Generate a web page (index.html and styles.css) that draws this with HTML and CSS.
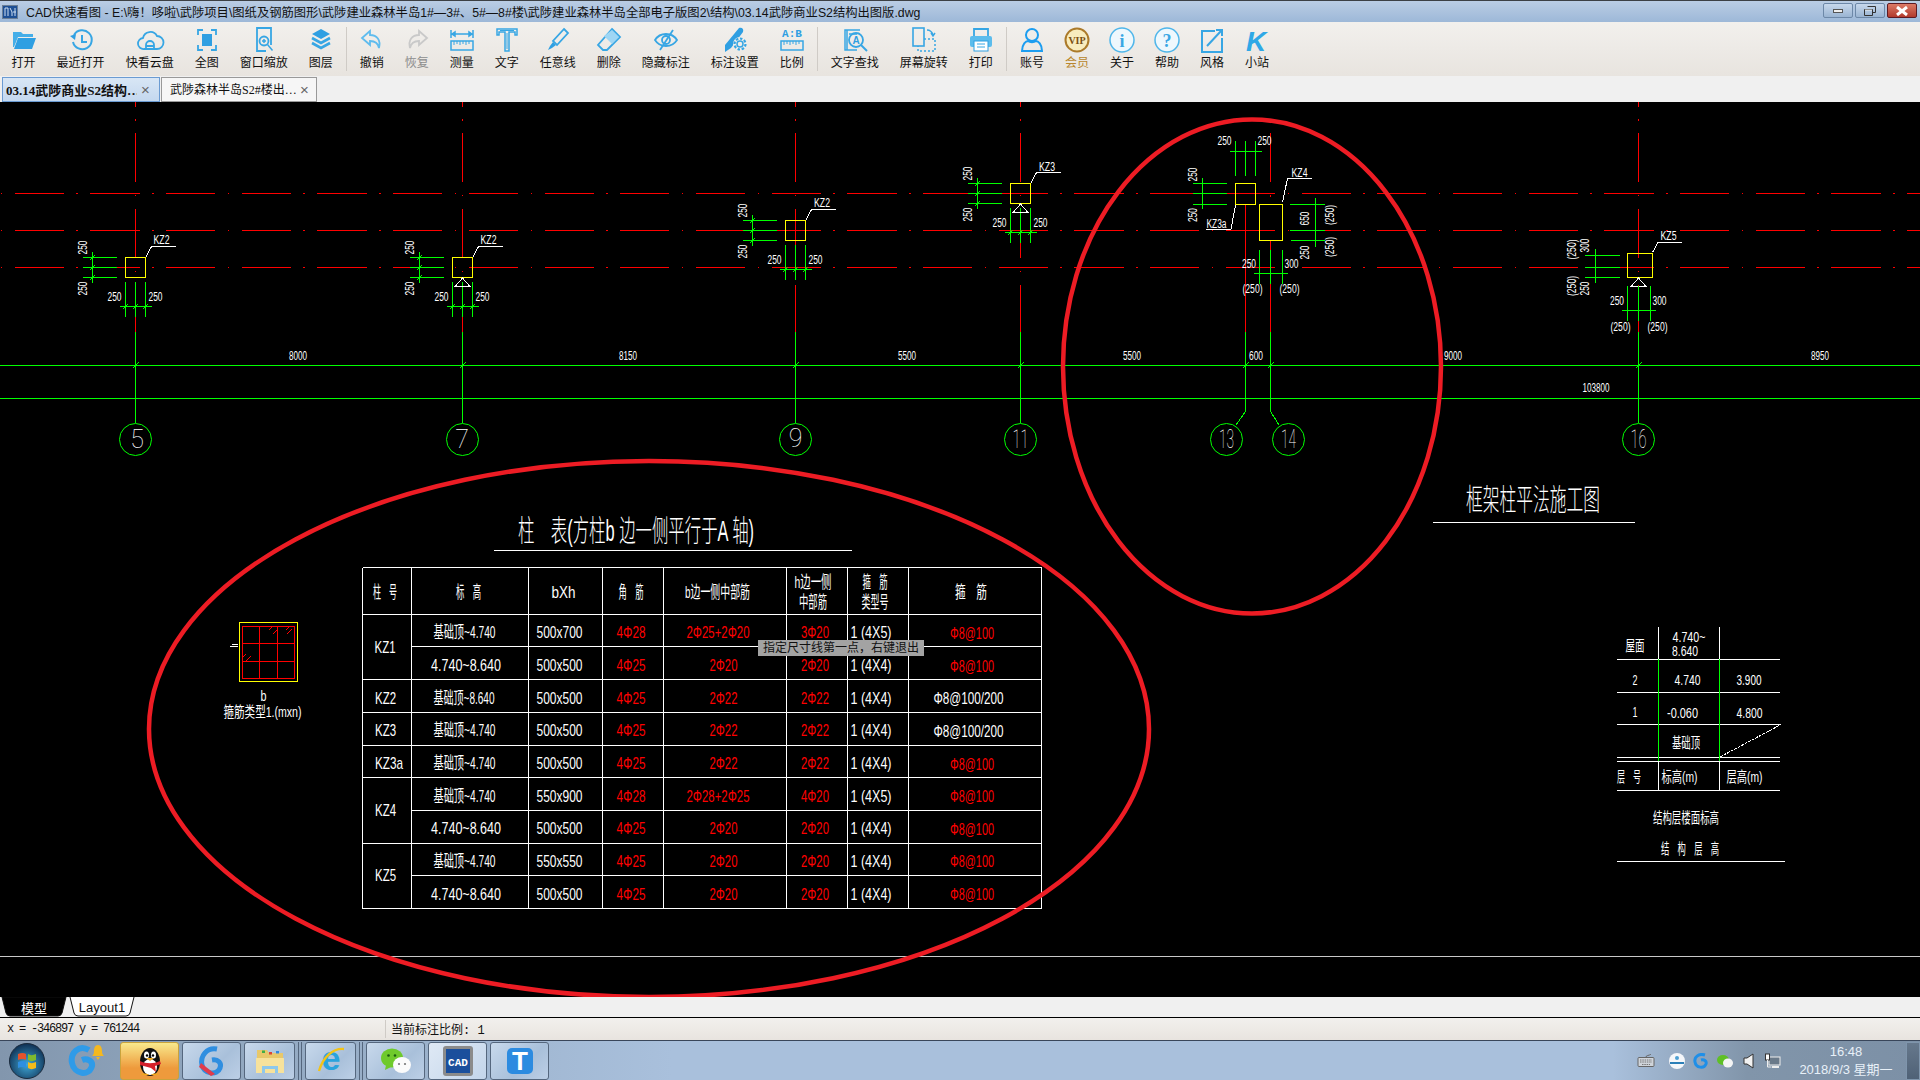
FILE: index.html
```html
<!DOCTYPE html>
<html lang="zh-CN">
  <head>
    <meta charset="UTF-8" />
    <title>CAD快速看图</title>
    <link rel="stylesheet" href="styles.css">
  </head>
  <body>
    <div class="app">
      <!-- 标题栏 -->
      <header class="titlebar">
        <svg class="app-icon" viewBox="0 0 16 14"><rect width="16" height="14" fill="#6b7f96"/><rect x="1" y="1" width="14" height="12" fill="#1d4f94"/><path d="M3 3v8M3 3h3v8M8 3l2 4v4M13 3v8M11 7h3" stroke="#cfe0f3" fill="none"/></svg>
        <span class="title-text">CAD快速看图 - E:\嗨！哆啦\武陟项目\图纸及钢筋图形\武陟建业森林半岛1#—3#、5#—8#楼\武陟建业森林半岛全部电子版图2\结构\03.14武陟商业S2结构出图版.dwg</span>
        <div class="winbtns">
          <span class="winbtn"><i class="w-min"></i></span>
          <span class="winbtn"><svg viewBox="0 0 14 12" width="14" height="12"><path d="M4.5 1.5h8v6h-3M1.5 4.5h8v6h-8z" fill="none" stroke="#333"/><path d="M2 5h7" stroke="#eee"/></svg></span>
          <span class="winbtn close"><svg viewBox="0 0 14 10" width="14" height="10"><path d="M2 1l10 8M12 1L2 9" stroke="#fff" stroke-width="3"/></svg></span>
        </div>
      </header>

      <!-- 工具栏 -->
      <nav class="toolbar">
        <a class="tool"><svg class="ico" viewBox="0 0 26 26"><path fill="#45aee8" d="M2 5h8l2 2h10v3H7L3 20H2z"/><path fill="#2f9fe2" d="M7 11h18l-4 11H3z"/></svg><span>打开</span></a>
        <a class="tool"><svg class="ico" viewBox="0 0 26 26"><path class="st" stroke-width="2" d="M6 8a9.500 9.500 0 1 1-1 7"/><path fill="#2f9fe2" d="M2 9l6-2-1 6z"/><path class="st" stroke-width="2" d="M14 8v7h5"/></svg><span>最近打开</span></a>
        <a class="tool"><svg class="ico" viewBox="0 0 26 26"><path class="st" stroke-width="1.800" d="M7 22a5.500 5.500 0 0 1-1-11 7.500 7.500 0 0 1 14-2 6.500 6.500 0 0 1 0 13z"/><path class="st" stroke-width="1.800" d="M9 22v-4a4 4 0 0 1 8 0v4M9 19h8"/></svg><span>快看云盘</span></a>
        <a class="tool"><svg class="ico" viewBox="0 0 26 26"><path class="st" stroke-width="1.800" d="M4 8V3h5M17 3h5v5M22 18v5h-5M9 23H4v-5"/><rect x="8" y="7" width="10" height="12" fill="#2f9fe2"/></svg><span>全图</span></a>
        <a class="tool"><svg class="ico" viewBox="0 0 26 26"><path class="st" stroke-width="1.800" d="M6 18V1h14v17"/><path class="st" stroke-width="1.800" d="M6 18v6h9"/><circle class="st" stroke-width="1.800" cx="13" cy="14" r="4.500"/><path class="st" stroke-width="1.500" d="M11 14h4M13 12v4M16.500 17.500l5 6"/></svg><span>窗口缩放</span></a>
        <a class="tool"><svg class="ico" viewBox="0 0 26 26"><path fill="#2f9fe2" d="M13 2l9 5-9 5-9-5z"/><path class="st" stroke-width="2.600" d="M4 11l9 5 9-5M4 16l9 5 9-5"/></svg><span>图层</span></a>
        <i class="sep"></i>
        <a class="tool"><svg class="ico" viewBox="0 0 26 26"><path class="st soft" stroke-width="1.800" d="M11 4L3 11l8 7v-4c5 0 8 2 9 7 2-8-2-13-9-13z"/></svg><span>撤销</span></a>
        <a class="tool off"><svg class="ico" viewBox="0 0 26 26"><path class="st gray" stroke-width="1.800" d="M15 4l8 7-8 7v-4c-5 0-8 2-9 7-2-8 2-13 9-13z"/></svg><span>恢复</span></a>
        <a class="tool"><svg class="ico" viewBox="0 0 26 26"><path class="st" stroke-width="1.500" d="M2 3v8M24 3v8M3 7h20M3 7l3-2v4zM23 7l-3-2v4z"/><rect class="st" stroke-width="1.500" x="2" y="14" width="22" height="9" fill="#dff1fb"/><path class="st" d="M5 14v4M8 14v3M11 14v4M14 14v3M17 14v4M20 14v3"/></svg><span>测量</span></a>
        <a class="tool"><svg class="ico" viewBox="0 0 26 26"><path class="st" stroke-width="1.500" d="M3 2h20v6h-2V5h-6v19h-4V5H5v3H3z"/><path class="st" d="M6 3.500h14M13 6v16"/></svg><span>文字</span></a>
        <a class="tool"><svg class="ico" viewBox="0 0 26 26"><path class="st" stroke-width="1.800" d="M19 2l4 4-11 12-4-4z"/><path fill="#2f9fe2" d="M8 15l3 3-4 3-4 2 2-4z"/></svg><span>任意线</span></a>
        <a class="tool"><svg class="ico" viewBox="0 0 26 26"><path class="st" stroke-width="1.800" d="M16 2l8 8-13 13H7l-5-5z"/><path fill="#9ed6f4" d="M16 3l7 7-7 7-8-8z"/></svg><span>删除</span></a>
        <a class="tool"><svg class="ico" viewBox="0 0 26 26"><path class="st" stroke-width="1.800" d="M2 13c5-8 17-8 22 0-5 8-17 8-22 0z"/><circle class="st" stroke-width="1.800" cx="13" cy="13" r="4"/><path class="st" stroke-width="1.800" d="M20 3L7 23"/></svg><span>隐藏标注</span></a>
        <a class="tool"><svg class="ico" viewBox="0 0 26 26"><path fill="#2f9fe2" d="M17 1c3-1 5 1 4 4L9 21l-6 4 0-7z"/><circle cx="18" cy="17" r="7" fill="#f0eeea"/><circle class="st" stroke-width="1.500" cx="18" cy="17" r="3"/><circle class="st" stroke-width="2.200" stroke-dasharray="2.500 1.700" cx="18" cy="17" r="5.500"/></svg><span>标注设置</span></a>
        <a class="tool"><svg class="ico" viewBox="0 0 26 26"><text class="ab" x="13" y="10" text-anchor="middle">A:B</text><rect class="st" stroke-width="1.500" x="2" y="14" width="22" height="9" fill="#dff1fb"/><path class="st" d="M5 14v4M8 14v3M11 14v4M14 14v3M17 14v4M20 14v3"/></svg><span>比例</span></a>
        <i class="sep"></i>
        <a class="tool"><svg class="ico" viewBox="0 0 26 26"><path class="st" stroke-width="1.500" d="M18 3H3v20h12M7 7h8M5 3v20"/><circle class="st" stroke-width="1.800" cx="14" cy="13" r="7" fill="#f0eeea"/><text class="afind" x="14" y="17" text-anchor="middle">A</text><path class="st" stroke-width="2" d="M19 18l6 6"/></svg><span>文字查找</span></a>
        <a class="tool"><svg class="ico" viewBox="0 0 26 26"><rect class="st" stroke-width="1.600" x="2" y="1" width="11" height="18"/><path class="st" stroke-width="1.500" stroke-dasharray="2 2" d="M13 12h11v12H7v-5"/><path class="st" stroke-width="1.500" d="M16 3c3 0 5 2 6 5M20 6l2 3 2-3"/></svg><span>屏幕旋转</span></a>
        <a class="tool"><svg class="ico" viewBox="0 0 26 26"><path class="st" stroke-width="1.800" d="M6 9V2h14v7"/><rect x="2" y="9" width="22" height="11" rx="2" fill="#5bbcec"/><rect x="6" y="14" width="14" height="10" fill="#fff" stroke="#2f9fe2"/><path class="st" d="M9 17h8M9 20h8"/></svg><span>打印</span></a>
        <i class="sep"></i>
        <a class="tool"><svg class="ico" viewBox="0 0 26 26"><circle cx="13" cy="8" r="6" fill="none" stroke="#1c9df0" stroke-width="2"/><path fill="none" stroke="#1c9df0" stroke-width="2" d="M3 24c0-7 4-10 6-10 2 1.500 6 1.500 8 0 2 0 6 3 6 10z"/></svg><span>账号</span></a>
        <a class="tool vip"><svg class="ico" viewBox="0 0 26 26"><circle cx="13" cy="13" r="11.500" fill="#f8ecbe" stroke="#ab7a2a" stroke-width="2"/><text class="viptxt" x="13" y="17" text-anchor="middle">VIP</text></svg><span>会员</span></a>
        <a class="tool"><svg class="ico" viewBox="0 0 26 26"><circle cx="13" cy="13" r="12" fill="#eef8fd" stroke="#4fb6ea" stroke-width="1.500"/><text class="inf" x="13" y="20" text-anchor="middle">i</text></svg><span>关于</span></a>
        <a class="tool"><svg class="ico" viewBox="0 0 26 26"><circle cx="13" cy="13" r="12" fill="#eef8fd" stroke="#4fb6ea" stroke-width="1.500"/><text class="inf" x="13" y="20" text-anchor="middle">?</text></svg><span>帮助</span></a>
        <a class="tool"><svg class="ico" viewBox="0 0 26 26"><path class="st" stroke-width="2" d="M16 4H3v21h20V11"/><path class="st" stroke-width="2" d="M17 3h6v6"/><path class="st" stroke-width="2" d="M8 19L22 4"/></svg><span>风格</span></a>
        <a class="tool"><svg class="ico" viewBox="0 0 26 26"><text class="ksite" x="12" y="24" text-anchor="middle">K</text></svg><span>小站</span></a>
      </nav>

      <!-- 文档标签 -->
      <div class="doctabs">
        <div class="doctab on"><span class="doctab-name">03.14武陟商业S2结构…</span><b class="x">×</b></div>
        <div class="doctab"><span class="doctab-name">武陟森林半岛S2#楼出…</span><b class="x">×</b></div>
      </div>

      <!-- 图纸区 -->
      <main class="canvas">
        <svg class="cad" viewBox="0 102 1920 895" width="1920" height="895">
          <defs>
            <!-- 一根柱子的标注，原点在轴线交点 -->
            <g id="dims">
              <rect class="yl" x="-10" y="-10" width="20" height="20"/>
              <path class="gr" d="M-53 -10H-18.500M-53 0H-18.500M-53 10H-18.500M-43 -15.500V15.500M-10 14.500V49M0 14.500V49M10 14.500V49M-16 39H16"/>
              <path class="gr" d="M-46 -7l5 -5M-46 3l5 -5M-46 13l5 -5M-13 42l5 -5M-3 42l5 -5M7 42l5 -5"/>
              <text class="d" textLength="14" lengthAdjust="spacingAndGlyphs" x="-21" y="29.500">250</text>
              <text class="d" textLength="14" lengthAdjust="spacingAndGlyphs" x="20" y="29.500">250</text>
              <text class="d" textLength="14" lengthAdjust="spacingAndGlyphs" transform="translate(-53 -20) rotate(-90)">250</text>
              <text class="d" textLength="14" lengthAdjust="spacingAndGlyphs" transform="translate(-53 21) rotate(-90)">250</text>
              <path class="wh" d="M10.500 -11L16 -21H40"/>
            </g>
            <path id="tri" class="wh" d="M0 10.500L7 18.500H-7Z"/>
            <path id="tk" class="gr" d="M-3 3L3 -3"/>
          </defs>

          <!-- 轴线 -->
          <path class="axis-h" d="M0 193.500H1920M0 267.500H1920"/>
          <path class="axis-h row2" d="M0 230.500H1920"/>
          <path class="axis-v" d="M135.500 102V332M462.500 102V332M795.500 102V332M1020.500 102V332M1638.500 102V332"/>
          <path class="rd" d="M1245.500 205V332M1270.500 133V182M1270.500 195V197M1270.500 241V332"/>

          <!-- 尺寸线 -->
          <path class="gr" d="M0 365.500H1920M0 398.500H1920"/>
          <path class="gr" d="M135.500 332V423M462.500 332V423M795.500 332V423M1020.500 332V423M1638.500 332V423M1245.500 332V411.500L1236 425M1270.500 332V411.500L1279 425"/>
          <use href="#tk" x="135.500" y="365.500"/><use href="#tk" x="462.500" y="365.500"/><use href="#tk" x="795.500" y="365.500"/><use href="#tk" x="1020.500" y="365.500"/><use href="#tk" x="1245.500" y="365.500"/><use href="#tk" x="1270.500" y="365.500"/><use href="#tk" x="1638.500" y="365.500"/>
          <text class="d" x="298" y="356" textLength="18" lengthAdjust="spacingAndGlyphs">8000</text>
          <text class="d" x="628" y="356" textLength="18" lengthAdjust="spacingAndGlyphs">8150</text>
          <text class="d" x="907" y="356" textLength="18" lengthAdjust="spacingAndGlyphs">5500</text>
          <text class="d" x="1132" y="356" textLength="18" lengthAdjust="spacingAndGlyphs">5500</text>
          <text class="d" x="1256" y="356" textLength="14" lengthAdjust="spacingAndGlyphs">600</text>
          <text class="d" x="1453" y="356" textLength="18" lengthAdjust="spacingAndGlyphs">9000</text>
          <text class="d" x="1820" y="356" textLength="18" lengthAdjust="spacingAndGlyphs">8950</text>
          <text class="d" x="1596" y="388" textLength="27" lengthAdjust="spacingAndGlyphs">103800</text>

          <!-- 柱 -->
          <use href="#dims" x="135.500" y="267.500"/>
          <use href="#dims" x="462.500" y="267.500"/><use href="#tri" x="462.500" y="267.500"/>
          <use href="#dims" x="795.500" y="230.500"/>
          <use href="#dims" x="1020.500" y="193.500"/><use href="#tri" x="1020.500" y="193.500"/>
          <text class="d" x="161.500" y="240" textLength="16" lengthAdjust="spacingAndGlyphs">KZ2</text>
          <text class="d" x="488.500" y="240" textLength="16" lengthAdjust="spacingAndGlyphs">KZ2</text>
          <text class="d" x="822" y="203" textLength="16" lengthAdjust="spacingAndGlyphs">KZ2</text>
          <text class="d" x="1047" y="166.500" textLength="16" lengthAdjust="spacingAndGlyphs">KZ3</text>

          <!-- 13、14轴 -->
          <rect class="yl" x="1235.500" y="183.500" width="20" height="21"/>
          <rect class="yl" x="1259.500" y="204.500" width="23" height="36"/>
          <path class="gr" d="M1235.500 141V175.500M1245.500 141V175.500M1255.500 141V175.500M1229.500 151.500H1261.500M1193 183.500H1226.500M1193 193.500H1226.500M1193 204.500H1226.500M1202.500 178V209M1290 204.500H1325M1290 230.500H1325M1291 240.500H1325M1315.500 198V246.500M1259.500 249.500V284M1270.500 249.500V284M1282.500 249.500V284M1254 273.500H1288"/>
          <path class="wh" d="M1235.500 205.500L1231 229H1206M1282.500 202L1287.500 178.500H1312"/>
          <text class="d" x="1224.500" y="141" textLength="14" lengthAdjust="spacingAndGlyphs">250</text>
          <text class="d" x="1264.500" y="141" textLength="14" lengthAdjust="spacingAndGlyphs">250</text>
          <text class="d" transform="translate(1192.500 174.500) rotate(-90)" textLength="14" lengthAdjust="spacingAndGlyphs">250</text>
          <text class="d" transform="translate(1192.500 215) rotate(-90)" textLength="14" lengthAdjust="spacingAndGlyphs">250</text>
          <text class="d" x="1216.500" y="224" textLength="20" lengthAdjust="spacingAndGlyphs">KZ3a</text>
          <text class="d" x="1299.500" y="173" textLength="16" lengthAdjust="spacingAndGlyphs">KZ4</text>
          <text class="d" transform="translate(1305 218.500) rotate(-90)" textLength="14" lengthAdjust="spacingAndGlyphs">650</text>
          <text class="d" transform="translate(1305 252.500) rotate(-90)" textLength="14" lengthAdjust="spacingAndGlyphs">250</text>
          <text class="d" transform="translate(1330 215) rotate(-90)" textLength="20" lengthAdjust="spacingAndGlyphs">(250)</text>
          <text class="d" transform="translate(1330 247) rotate(-90)" textLength="20" lengthAdjust="spacingAndGlyphs">(250)</text>
          <text class="d" x="1249" y="263.500" textLength="14" lengthAdjust="spacingAndGlyphs">250</text>
          <text class="d" x="1291.500" y="263.500" textLength="14" lengthAdjust="spacingAndGlyphs">300</text>
          <text class="d" x="1252.500" y="289" textLength="20" lengthAdjust="spacingAndGlyphs">(250)</text>
          <text class="d" x="1289.500" y="289" textLength="20" lengthAdjust="spacingAndGlyphs">(250)</text>

          <!-- 16轴 -->
          <rect class="yl" x="1627.500" y="253.500" width="25" height="24"/>
          <use href="#tri" x="1638.500" y="267.500"/>
          <path class="gr" d="M1585 255.500H1620M1585 267.500H1620M1585 277.500H1620M1595.500 249V283M1627.500 286V320.500M1638.500 286V320.500M1650.500 286V320.500M1622 310.500H1656"/>
          <path class="wh" d="M1652.500 252.500L1658 242.500H1681.500"/>
          <text class="d" x="1668.500" y="236" textLength="16" lengthAdjust="spacingAndGlyphs">KZ5</text>
          <text class="d" transform="translate(1585 245.500) rotate(-90)" textLength="14" lengthAdjust="spacingAndGlyphs">300</text>
          <text class="d" transform="translate(1585 288.500) rotate(-90)" textLength="14" lengthAdjust="spacingAndGlyphs">250</text>
          <text class="d" transform="translate(1571.500 249.500) rotate(-90)" textLength="20" lengthAdjust="spacingAndGlyphs">(250)</text>
          <text class="d" transform="translate(1571.500 286) rotate(-90)" textLength="20" lengthAdjust="spacingAndGlyphs">(250)</text>
          <text class="d" x="1617" y="300.500" textLength="14" lengthAdjust="spacingAndGlyphs">250</text>
          <text class="d" x="1659.500" y="300.500" textLength="14" lengthAdjust="spacingAndGlyphs">300</text>
          <text class="d" x="1620.500" y="326.500" textLength="20" lengthAdjust="spacingAndGlyphs">(250)</text>
          <text class="d" x="1657.500" y="326.500" textLength="20" lengthAdjust="spacingAndGlyphs">(250)</text>

          <!-- 轴号 -->
          <g class="bubble">
            <circle cx="135.500" cy="439.500" r="16"/><circle cx="462.500" cy="439.500" r="16"/><circle cx="795.500" cy="439.500" r="16"/><circle cx="1020.500" cy="439.500" r="16"/><circle cx="1226.500" cy="439.500" r="16"/><circle cx="1288.500" cy="439.500" r="16"/><circle cx="1638.500" cy="439.500" r="16"/>
          </g>
          <text class="num" x="137" y="439.500">5</text>
          <text class="num" x="462" y="439.500">7</text>
          <text class="num" x="795.500" y="438.500">9</text>
          <text class="num" x="1020.500" y="439.500" textLength="16" lengthAdjust="spacingAndGlyphs">11</text>
          <text class="num" x="1226.500" y="439.500" textLength="15" lengthAdjust="spacingAndGlyphs">13</text>
          <text class="num" x="1288.500" y="439.500" textLength="15" lengthAdjust="spacingAndGlyphs">14</text>
          <text class="num" x="1638.500" y="439.500" textLength="16" lengthAdjust="spacingAndGlyphs">16</text>

          <!-- 标题 -->
          <text class="h1" x="636" y="530" textLength="236" lengthAdjust="spacingAndGlyphs">柱　表(方柱b 边一侧平行于A 轴)</text>
          <path class="wh" d="M494 550.500H852M1433 522.500H1635"/>
          <text class="h1" x="1533" y="499" textLength="134" lengthAdjust="spacingAndGlyphs">框架柱平法施工图</text>

          <!-- 柱表 -->
          <path class="wh" d="M362.500 567.500H1041.500M362.500 614.500H1041.500M411.500 646.500H1041.500M362.500 679.500H1041.500M362.500 712.500H1041.500M362.500 745.500H1041.500M362.500 777.500H1041.500M411.500 810.500H1041.500M362.500 843.500H1041.500M411.500 875.500H1041.500M362.500 908.500H1041.500M362.500 567.500V908.500M411.500 567.500V908.500M528.500 567.500V908.500M602.500 567.500V908.500M663.500 567.500V908.500M786.500 567.500V908.500M847.500 567.500V908.500M908.500 567.500V908.500M1041.500 567.500V908.500"/>
          <g class="tb">
            <text x="385" y="592" textLength="24" lengthAdjust="spacingAndGlyphs">柱　号</text>
            <text x="468.500" y="592" textLength="25" lengthAdjust="spacingAndGlyphs">标　高</text>
            <text x="563.500" y="592" textLength="24" lengthAdjust="spacingAndGlyphs">bXh</text>
            <text x="631" y="592" textLength="25" lengthAdjust="spacingAndGlyphs">角　筋</text>
            <text x="717.500" y="592" textLength="65" lengthAdjust="spacingAndGlyphs">b边一侧中部筋</text>
            <text x="813" y="582" textLength="37" lengthAdjust="spacingAndGlyphs">h边一侧</text>
            <text x="813" y="602" textLength="28" lengthAdjust="spacingAndGlyphs">中部筋</text>
            <text x="875" y="582" textLength="25" lengthAdjust="spacingAndGlyphs">箍　筋</text>
            <text x="875" y="602" textLength="27" lengthAdjust="spacingAndGlyphs">类型号</text>
            <text x="971" y="592" textLength="32" lengthAdjust="spacingAndGlyphs">箍　筋</text>

            <text x="385" y="647" textLength="21" lengthAdjust="spacingAndGlyphs">KZ1</text>
            <text x="385.500" y="698" textLength="21" lengthAdjust="spacingAndGlyphs">KZ2</text>
            <text x="385.500" y="730.500" textLength="21" lengthAdjust="spacingAndGlyphs">KZ3</text>
            <text x="389" y="763.500" textLength="28" lengthAdjust="spacingAndGlyphs">KZ3a</text>
            <text x="385.500" y="810" textLength="21" lengthAdjust="spacingAndGlyphs">KZ4</text>
            <text x="385.500" y="875" textLength="21" lengthAdjust="spacingAndGlyphs">KZ5</text>

            <text x="464.500" y="632.500" textLength="62" lengthAdjust="spacingAndGlyphs">基础顶~4.740</text>
            <text x="466" y="665" textLength="70" lengthAdjust="spacingAndGlyphs">4.740~8.640</text>
            <text x="464" y="698" textLength="61" lengthAdjust="spacingAndGlyphs">基础顶~8.640</text>
            <text x="464.500" y="730.500" textLength="62" lengthAdjust="spacingAndGlyphs">基础顶~4.740</text>
            <text x="464.500" y="763.500" textLength="62" lengthAdjust="spacingAndGlyphs">基础顶~4.740</text>
            <text x="464.500" y="796" textLength="62" lengthAdjust="spacingAndGlyphs">基础顶~4.740</text>
            <text x="466" y="828.500" textLength="70" lengthAdjust="spacingAndGlyphs">4.740~8.640</text>
            <text x="464.500" y="861" textLength="62" lengthAdjust="spacingAndGlyphs">基础顶~4.740</text>
            <text x="466" y="894" textLength="70" lengthAdjust="spacingAndGlyphs">4.740~8.640</text>

            <text x="559.500" y="632.500" textLength="46" lengthAdjust="spacingAndGlyphs">500x700</text>
            <text x="559.500" y="665" textLength="46" lengthAdjust="spacingAndGlyphs">500x500</text>
            <text x="559.500" y="698" textLength="46" lengthAdjust="spacingAndGlyphs">500x500</text>
            <text x="559.500" y="730.500" textLength="46" lengthAdjust="spacingAndGlyphs">500x500</text>
            <text x="559.500" y="763.500" textLength="46" lengthAdjust="spacingAndGlyphs">500x500</text>
            <text x="559.500" y="796" textLength="46" lengthAdjust="spacingAndGlyphs">550x900</text>
            <text x="559.500" y="828.500" textLength="46" lengthAdjust="spacingAndGlyphs">500x500</text>
            <text x="559.500" y="861" textLength="46" lengthAdjust="spacingAndGlyphs">550x550</text>
            <text x="559.500" y="894" textLength="46" lengthAdjust="spacingAndGlyphs">500x500</text>

            <text x="871" y="632.500" textLength="41" lengthAdjust="spacingAndGlyphs">1 (4X5)</text>
            <text x="871" y="665" textLength="41" lengthAdjust="spacingAndGlyphs">1 (4X4)</text>
            <text x="871" y="698" textLength="41" lengthAdjust="spacingAndGlyphs">1 (4X4)</text>
            <text x="871" y="730.500" textLength="41" lengthAdjust="spacingAndGlyphs">1 (4X4)</text>
            <text x="871" y="763.500" textLength="41" lengthAdjust="spacingAndGlyphs">1 (4X4)</text>
            <text x="871" y="796" textLength="41" lengthAdjust="spacingAndGlyphs">1 (4X5)</text>
            <text x="871" y="828.500" textLength="41" lengthAdjust="spacingAndGlyphs">1 (4X4)</text>
            <text x="871" y="861" textLength="41" lengthAdjust="spacingAndGlyphs">1 (4X4)</text>
            <text x="871" y="894" textLength="41" lengthAdjust="spacingAndGlyphs">1 (4X4)</text>

            <text x="968.500" y="698.500" textLength="70" lengthAdjust="spacingAndGlyphs">Φ8@100/200</text>
            <text x="968.500" y="731" textLength="70" lengthAdjust="spacingAndGlyphs">Φ8@100/200</text>
          </g>
          <g class="tb red">
            <text x="631" y="632.500" textLength="29" lengthAdjust="spacingAndGlyphs">4Φ28</text>
            <text x="631" y="665" textLength="29" lengthAdjust="spacingAndGlyphs">4Φ25</text>
            <text x="631" y="698" textLength="29" lengthAdjust="spacingAndGlyphs">4Φ25</text>
            <text x="631" y="730.500" textLength="29" lengthAdjust="spacingAndGlyphs">4Φ25</text>
            <text x="631" y="763.500" textLength="29" lengthAdjust="spacingAndGlyphs">4Φ25</text>
            <text x="631" y="796" textLength="29" lengthAdjust="spacingAndGlyphs">4Φ28</text>
            <text x="631" y="828.500" textLength="29" lengthAdjust="spacingAndGlyphs">4Φ25</text>
            <text x="631" y="861" textLength="29" lengthAdjust="spacingAndGlyphs">4Φ25</text>
            <text x="631" y="894" textLength="29" lengthAdjust="spacingAndGlyphs">4Φ25</text>

            <text x="718" y="632.500" textLength="63" lengthAdjust="spacingAndGlyphs">2Φ25+2Φ20</text>
            <text x="723.500" y="665" textLength="28" lengthAdjust="spacingAndGlyphs">2Φ20</text>
            <text x="723.500" y="698" textLength="28" lengthAdjust="spacingAndGlyphs">2Φ22</text>
            <text x="723.500" y="730.500" textLength="28" lengthAdjust="spacingAndGlyphs">2Φ22</text>
            <text x="723.500" y="763.500" textLength="28" lengthAdjust="spacingAndGlyphs">2Φ22</text>
            <text x="718" y="796" textLength="63" lengthAdjust="spacingAndGlyphs">2Φ28+2Φ25</text>
            <text x="723.500" y="828.500" textLength="28" lengthAdjust="spacingAndGlyphs">2Φ20</text>
            <text x="723.500" y="861" textLength="28" lengthAdjust="spacingAndGlyphs">2Φ20</text>
            <text x="723.500" y="894" textLength="28" lengthAdjust="spacingAndGlyphs">2Φ20</text>

            <text x="815" y="632.500" textLength="28" lengthAdjust="spacingAndGlyphs">3Φ20</text>
            <text x="815" y="665" textLength="28" lengthAdjust="spacingAndGlyphs">2Φ20</text>
            <text x="815" y="698" textLength="28" lengthAdjust="spacingAndGlyphs">2Φ22</text>
            <text x="815" y="730.500" textLength="28" lengthAdjust="spacingAndGlyphs">2Φ22</text>
            <text x="815" y="763.500" textLength="28" lengthAdjust="spacingAndGlyphs">2Φ22</text>
            <text x="815" y="796" textLength="28" lengthAdjust="spacingAndGlyphs">4Φ20</text>
            <text x="815" y="828.500" textLength="28" lengthAdjust="spacingAndGlyphs">2Φ20</text>
            <text x="815" y="861" textLength="28" lengthAdjust="spacingAndGlyphs">2Φ20</text>
            <text x="815" y="894" textLength="28" lengthAdjust="spacingAndGlyphs">2Φ20</text>

            <text x="972" y="633.500" textLength="44" lengthAdjust="spacingAndGlyphs">Φ8@100</text>
            <text x="972" y="666" textLength="44" lengthAdjust="spacingAndGlyphs">Φ8@100</text>
            <text x="972" y="764" textLength="44" lengthAdjust="spacingAndGlyphs">Φ8@100</text>
            <text x="972" y="796.500" textLength="44" lengthAdjust="spacingAndGlyphs">Φ8@100</text>
            <text x="972" y="829" textLength="44" lengthAdjust="spacingAndGlyphs">Φ8@100</text>
            <text x="972" y="861.500" textLength="44" lengthAdjust="spacingAndGlyphs">Φ8@100</text>
            <text x="972" y="894.500" textLength="44" lengthAdjust="spacingAndGlyphs">Φ8@100</text>
          </g>

          <!-- 箍筋类型 -->
          <rect class="yl" x="239.500" y="622.500" width="58" height="59"/>
          <path class="rd2" d="M242.500 626.500H294.500V678.500H242.500ZM259.500 626.500V678.500M277.500 626.500V678.500M242.500 643.500H294.500M242.500 661.500H294.500"/>
          <path class="rd" d="M269 630l3-3M273 634l5-5M286 630l3-3M287 634l5-5M243 657l3-3M246 661l5-5"/>
          <path class="wh" d="M230 646.500H238M232 644.500H238"/>
          <text class="tb2" x="263.500" y="695" textLength="6" lengthAdjust="spacingAndGlyphs">b</text>
          <text class="tb2" x="262.500" y="711" textLength="78" lengthAdjust="spacingAndGlyphs">箍筋类型1.(mxn)</text>

          <!-- 结构层高表 -->
          <path class="wh" d="M1617 659.500H1780M1617 692.500H1780M1617 724.500H1780M1617 757.500H1780M1617 761.500H1780M1617 790.500H1780M1617 861.500H1785M1658.500 627V659M1719.500 627V659M1658.500 761V790M1719.500 761V790"/>
          <path class="gr" d="M1658.500 659V761M1719.500 659V761"/>
          <path class="wh dash" d="M1720 757L1781 724.500"/>
          <g class="tb2">
            <text x="1635" y="645" textLength="19" lengthAdjust="spacingAndGlyphs">屋面</text>
            <text x="1689" y="636.500" textLength="33" lengthAdjust="spacingAndGlyphs">4.740~</text>
            <text x="1685" y="650" textLength="26" lengthAdjust="spacingAndGlyphs">8.640</text>
            <text x="1635" y="679.500" textLength="5" lengthAdjust="spacingAndGlyphs">2</text>
            <text x="1687.500" y="679.500" textLength="26" lengthAdjust="spacingAndGlyphs">4.740</text>
            <text x="1749" y="679" textLength="25" lengthAdjust="spacingAndGlyphs">3.900</text>
            <text x="1635" y="711" textLength="5" lengthAdjust="spacingAndGlyphs">1</text>
            <text x="1682.500" y="712" textLength="31" lengthAdjust="spacingAndGlyphs">-0.060</text>
            <text x="1749.500" y="712" textLength="26" lengthAdjust="spacingAndGlyphs">4.800</text>
            <text x="1686" y="742.500" textLength="28" lengthAdjust="spacingAndGlyphs">基础顶</text>
            <text x="1629" y="776.500" textLength="24" lengthAdjust="spacingAndGlyphs">层　号</text>
            <text x="1679.500" y="776.500" textLength="36" lengthAdjust="spacingAndGlyphs">标高(m)</text>
            <text x="1744.500" y="776.500" textLength="36" lengthAdjust="spacingAndGlyphs">层高(m)</text>
            <text x="1686" y="817.500" textLength="66" lengthAdjust="spacingAndGlyphs">结构层楼面标高</text>
            <text x="1690" y="848.500" textLength="58" lengthAdjust="spacingAndGlyphs">结　构　层　高</text>
          </g>

          <path class="lim" d="M0 956.500H1920"/>

          <!-- 手工圈注 -->
          <ellipse class="ring" cx="1252" cy="366.500" rx="189" ry="247"/>
          <ellipse class="ring" cx="649" cy="729" rx="500" ry="268"/>
        </svg>
        <!-- 跟随光标的提示 -->
        <div class="tip">指定尺寸线第一点，右键退出</div>
      </main>

      <!-- 布局标签 -->
      <div class="sheets">
        <div class="sheet on"><svg viewBox="0 0 66 20" width="66" height="20"><path d="M1 0l4 16q1 3 4 3h48q3 0 4-3l4-16z"/></svg><span>模型</span></div>
        <div class="sheet"><svg viewBox="0 0 66 20" width="66" height="20"><path d="M1 0l4 16q1 3 4 3h48q3 0 4-3l4-16"/></svg><span>Layout1</span></div>
      </div>

      <!-- 状态栏 -->
      <footer class="status">
        <span class="coords">x = -346897 y = 761244</span>
        <span class="scale">当前标注比例: 1</span>
      </footer>

      <!-- 任务栏 -->
      <div class="taskbar">
        <svg class="orb" viewBox="0 0 36 36"><defs><radialGradient id="og" cx=".5" cy=".6" r=".6"><stop offset="0" stop-color="#3fa9d8"/><stop offset="1" stop-color="#0f2f52"/></radialGradient></defs><circle cx="18" cy="18" r="17.500" fill="url(#og)" stroke="#1a2a3c"/><path fill="#e5532b" d="M9 11c3-1.500 6-1.500 8 0v6c-2-1.500-5-1.500-8 0z"/><path fill="#7fba2e" d="M19 11c2 1.500 5 1.500 8 0v6c-3 1.500-6 1.500-8 0z"/><path fill="#2f8fe0" d="M9 19c3-1.500 6-1.500 8 0v6c-2-1.500-5-1.500-8 0z"/><path fill="#f5bb1a" d="M19 19c2 1.500 5 1.500 8 0v6c-3 1.500-6 1.500-8 0z"/></svg>
        <div class="pin"><svg viewBox="0 0 40 36"><path d="M22 7C12 1 3 10 5 20c2 11 17 14 20 3 1-5-5-8-10-6" fill="none" stroke="#2f9be8" stroke-width="6"/><path fill="#f5b81f" d="M31 2c3 0 4 3 4 6s1 4 2 5H25c1-1 2-2 2-5s1-6 4-6zM29 14h4l-2 3z"/></svg></div>
        <div class="task qq"><svg viewBox="0 0 32 32"><ellipse cx="16" cy="17" rx="10" ry="14" fill="#111"/><ellipse cx="16" cy="22" rx="7" ry="8" fill="#fff"/><ellipse cx="12.500" cy="10" rx="2.500" ry="3.500" fill="#fff"/><ellipse cx="19.500" cy="10" rx="2.500" ry="3.500" fill="#fff"/><circle cx="13" cy="10.500" r="1.200"/><circle cx="19" cy="10.500" r="1.200"/><path fill="#f0a81c" d="M12 13h8l-4 3z"/><path fill="#d5202a" d="M6 16c6 3 14 3 20 0l1 3-6 2 1 6-5-4-11-3z"/><path fill="#f0a81c" d="M7 30c2-2 6-2 8 0zM17 30c2-2 6-2 8 0z"/></svg></div>
        <div class="task"><svg viewBox="0 0 32 32"><path d="M21 4C11 2 4 11 6 20c2 9 15 11 18 3 2-5-2-9-8-8" fill="none" stroke="#2f8ee0" stroke-width="5"/><path fill="#e23b4a" d="M5 18l14 11-4 2L3 22z"/></svg></div>
        <div class="task short"><svg viewBox="0 0 32 32"><path fill="#e8c86a" d="M3 5h10l2 3h14v20H3z"/><path fill="#f7e29c" d="M2 13h28v15H2z"/><rect x="8" y="5.500" width="3" height="2.500" fill="#3fae49"/><rect x="15" y="7" width="3" height="2.500" fill="#d43"/><rect x="22" y="6" width="3" height="2.500" fill="#38d"/><path fill="#8ec8ec" d="M8 28v-7h16v7h-3v-4H11v4z"/></svg></div>
        <i class="task-gap"></i>
        <div class="task short"><svg viewBox="0 0 32 32"><text class="ie" x="16" y="25" text-anchor="middle">e</text><path d="M4 26C8 12 18 3 29 4" fill="none" stroke="#f2c318" stroke-width="2.400"/></svg></div>
        <i class="task-gap"></i>
        <div class="task"><svg viewBox="0 0 32 32"><ellipse cx="12" cy="13" rx="11" ry="9.500" fill="#6fca2c"/><path fill="#6fca2c" d="M6 20l-1 5 6-3z"/><circle cx="8.500" cy="10.500" r="1.300" fill="#1c5b10"/><circle cx="15" cy="10.500" r="1.300" fill="#1c5b10"/><ellipse cx="22" cy="20" rx="9" ry="8" fill="#fbfbfb"/><circle cx="19" cy="19" r="1.100" fill="#777"/><circle cx="25" cy="19" r="1.100" fill="#777"/></svg></div>
        <div class="task lit"><svg viewBox="0 0 32 32"><rect x="1" y="1" width="30" height="30" rx="3" fill="#8b8b8b"/><rect x="4" y="4" width="24" height="24" fill="#1b4f9c"/><text class="cadmark" x="16" y="21" text-anchor="middle">CAD</text></svg></div>
        <div class="task"><svg viewBox="0 0 32 32"><rect x="3" y="3" width="26" height="26" rx="5" fill="#2c8be0"/><text class="tmark" x="16" y="25" text-anchor="middle">T</text></svg></div>

        <div class="tray">
          <svg class="kbd" viewBox="0 0 18 14" width="18" height="14"><path d="M9 3c0-2 3-1 5-3" fill="none" stroke="#666"/><rect x="1" y="3.500" width="16" height="9" rx="1" fill="#cfd4da" stroke="#666"/><path d="M3 6h12M3 8h12M5 10.500h8" stroke="#777" stroke-dasharray="1.500 .8"/></svg>
          <svg viewBox="0 0 16 16" width="16" height="16"><circle cx="8" cy="8" r="8" fill="#f5f7fa"/><path d="M1 10h14" stroke="#2b7fb8" stroke-width="2"/><circle cx="8" cy="5" r="2" fill="#4da0d2"/></svg>
          <svg viewBox="0 0 16 16" width="16" height="16"><path d="M12 2C6 0 1 4 2 9c1 6 9 7 11 2 1-3-2-5-5-4" fill="none" stroke="#1f8fe8" stroke-width="3"/></svg>
          <svg viewBox="0 0 16 16" width="16" height="16"><ellipse cx="6" cy="7" rx="6" ry="5" fill="#5fc026"/><ellipse cx="11" cy="10" rx="5" ry="4.500" fill="#f4f4f4"/></svg>
          <svg class="spk" viewBox="0 0 12 16" width="12" height="16"><path d="M1 5h3l6-4v14l-6-4H1z" fill="#f2f2f2" stroke="#333"/></svg>
          <svg viewBox="0 0 16 16" width="16" height="16"><rect x="4" y="4" width="11" height="8" fill="#6a7a8a" stroke="#eee"/><path d="M7 14h7" stroke="#eee" stroke-width="2"/><rect x=".5" y="1" width="4" height="6" fill="#fff" stroke="#333"/><path d="M2.500 7v7h4" fill="none" stroke="#eee"/></svg>
        </div>
        <div class="clock"><span>16:48</span><span>2018/9/3 星期一</span></div>
        <div class="showdesk"></div>
      </div>
    </div>
  </body>
</html>
```

FILE: styles.css
```css
* {
  padding: 0;
  margin: 0;
  box-sizing: border-box;
}

body {
  background: #000;
  font-family: "Liberation Sans", "Noto Sans CJK SC", sans-serif;
  font-size: 12px;
  color: #111;
  overflow: hidden;
}

.app {
  width: 1920px;
  height: 1080px;
  display: flex;
  flex-direction: column;
}

/* 标题栏 */
.titlebar {
  height: 22px;
  display: flex;
  align-items: center;
  padding-left: 2px;
  border-top: 1px solid #3c4044;
  background: linear-gradient(#bacde4, #9db8d8);
}

.app-icon {
  width: 16px;
  height: 14px;
}

.title-text {
  margin-left: 8px;
  font-size: 12.3px;
  white-space: nowrap;
}

.winbtns {
  margin-left: auto;
  display: flex;
  gap: 2px;
  padding-right: 3px;
  align-self: flex-start;
  margin-top: 2px;
}

.winbtn {
  width: 30px;
  height: 15px;
  display: flex;
  align-items: center;
  justify-content: center;
  border: 1px solid #6d88a8;
  border-radius: 2px;
  background: linear-gradient(#c7d8ec, #9ab4d2);
}

.winbtn.close {
  border-color: #5e1a22;
  background: linear-gradient(#dc7a66, #b23a2c);
}

.w-min {
  display: block;
  width: 10px;
  height: 4px;
  background: #eee;
  border: 1px solid #555;
}

/* 工具栏 */
.toolbar {
  height: 54px;
  display: flex;
  gap: 21px;
  padding: 5px 0 0 11.6px;
  background: linear-gradient(#f2f0ed, #e8e4df);
}

.tool {
  display: flex;
  flex-direction: column;
  align-items: center;
}

.tool span {
  line-height: 20px;
  white-space: nowrap;
}

.tool.off span {
  color: #8d8d8d;
}

.tool.vip span {
  color: #b8862d;
}

.ico {
  width: 26px;
  height: 26px;
  margin: 0 -4px;
  overflow: visible;
}

.st {
  fill: none;
  stroke: #37a6e4;
}

.st.soft {
  stroke: #5fbcee;
}

.st.gray {
  stroke: #c9c9c9;
}

.sep {
  width: 1px;
  height: 44px;
  margin: 0 -8px;
  background: #cfcbc6;
}

.ab {
  font: bold 11px "Liberation Mono", monospace;
  fill: #2f9fe2;
}

.afind {
  font: bold 10px "Liberation Sans", sans-serif;
  fill: #2f9fe2;
}

.viptxt {
  font: bold 10px "Liberation Serif", serif;
  fill: #7a4f10;
}

.inf {
  font: bold 18px "Liberation Serif", serif;
  fill: #3aa7e4;
}

.ksite {
  font: italic bold 28px "Liberation Sans", sans-serif;
  fill: #2fa8e6;
}

/* 文档标签 */
.doctabs {
  height: 26px;
  display: flex;
  gap: 1px;
  padding: 1px 0 0 2px;
  background: #f0f0f0;
}

.doctab {
  width: 156px;
  display: flex;
  align-items: center;
  padding: 0 0 1px 8px;
  border: 1px solid #999;
  background: #f6f6f6;
  font-family: "Liberation Serif", "Noto Sans CJK SC", serif;
  overflow: hidden;
}

.doctab.on {
  width: 158px;
  padding-left: 3px;
  border-color: #6b9bd2;
  background: linear-gradient(#d8e6f5, #c4d8ef);
  font-weight: bold;
  font-size: 13px;
}

.doctab-name {
  width: 126px;
  white-space: nowrap;
  overflow: hidden;
}

.doctab.on .doctab-name {
  width: 131px;
}

.x {
  margin-left: 4px;
  font: normal 15px "Liberation Sans", sans-serif;
  color: #666;
}

/* 图纸区 */
.canvas {
  position: relative;
  height: 895px;
  background: #000;
  overflow: hidden;
}

.cad {
  display: block;
}

.cad path,
.cad rect,
.cad circle,
.cad ellipse {
  fill: none;
}

.gr {
  stroke: #0f0;
  shape-rendering: crispEdges;
}

.wh {
  stroke: #fff;
  shape-rendering: crispEdges;
}

.wh.dash {
  stroke-dasharray: 3 1;
}

.yl {
  stroke: #ff0;
  shape-rendering: crispEdges;
}

.rd {
  stroke: #f00;
  shape-rendering: crispEdges;
}

.rd2 {
  stroke: #f00;
  stroke-width: 1.5;
  shape-rendering: crispEdges;
}

.axis-h,
.axis-v {
  stroke: #f00;
  shape-rendering: crispEdges;
  stroke-dasharray: 49.2 12.5 1.5 12.5;
}

.axis-h {
  stroke-dashoffset: 61.1;
}

.axis-h.row2 {
  stroke-width: 1.4;
}

.axis-v {
  stroke-dashoffset: 44.5;
}

.lim {
  stroke: #c8c8c8;
  shape-rendering: crispEdges;
}

.bubble circle {
  stroke: #0f0;
}

.ring {
  stroke: #ed1c24;
  stroke-width: 4.5;
}

.cad text {
  font-family: "Liberation Sans", "Noto Sans CJK SC", sans-serif;
  text-anchor: middle;
  dominant-baseline: central;
  fill: #fff;
}

.d {
  font-size: 12px;
}

.cad .num {
  font-size: 25px;
  font-family: Roboto, "Liberation Sans", sans-serif;
  font-weight: 100;
}

.h1 {
  font-size: 30px;
  font-weight: 300;
}

.tb text {
  font-size: 17px;
}

.cad .tb.red text {
  fill: #f00;
}

.cad .tb2,
.tb2 text {
  font-size: 15px;
}

.tip {
  position: absolute;
  left: 758px;
  top: 538px;
  width: 166px;
  height: 16px;
  line-height: 16px;
  text-align: center;
  background: #a3a3a3;
  color: #111;
  white-space: nowrap;
}

/* 布局标签 */
.sheets {
  height: 21px;
  display: flex;
  gap: 2px;
  padding-left: 1px;
  border-bottom: 1px solid #000;
  background: #f0f0f0;
}

.sheet {
  position: relative;
  width: 66px;
  height: 20px;
  display: flex;
  align-items: center;
  justify-content: center;
  font-size: 13px;
}

.sheet svg {
  position: absolute;
  left: 0;
  top: 0;
}

.sheet path {
  fill: #fff;
  stroke: #111;
}

.sheet span {
  position: relative;
}

.sheet.on path {
  fill: #000;
}

.sheet.on span {
  color: #fff;
}

/* 状态栏 */
.status {
  height: 22px;
  display: flex;
  align-items: center;
  background: linear-gradient(#f2f0ed, #e8e4df);
}

.coords {
  width: 386px;
  padding-left: 7px;
  height: 18px;
  line-height: 18px;
  border-right: 1px solid #cfcbc6;
  font-family: "Liberation Mono", monospace;
  letter-spacing: -1.2px;
}

.scale {
  padding-left: 5px;
  font-family: "Liberation Mono", "Noto Sans CJK SC", monospace;
}

/* 任务栏 */
.taskbar {
  height: 40px;
  display: flex;
  align-items: center;
  border-top: 1px solid #39465a;
  background: linear-gradient(90deg, #8296ad 0, #8fa5bd 10%, #a9c0dc 35%, #a9c0dc 84%, #8195aa 91%, #7c90a6 100%);
}

.orb {
  width: 36px;
  height: 36px;
  margin-left: 9px;
}

.pin {
  width: 40px;
  height: 36px;
  margin: 0 13px 0 22px;
}

.pin svg {
  width: 40px;
  height: 36px;
}

.task {
  width: 59px;
  height: 38px;
  margin-right: 3px;
  display: flex;
  align-items: center;
  justify-content: center;
  border: 1px solid #55677e;
  border-radius: 3px;
  background: linear-gradient(135deg, #c8d9ec, #a9c0da 60%, #bccfe6);
}

.task.short {
  width: 51px;
}

.task.lit {
  background: linear-gradient(135deg, #dfe9f5, #c3d5ea);
}

.task.qq {
  border-color: #c9a33c;
  background: linear-gradient(#f8e98c, #ee9a3c 70%);
}

.task svg {
  width: 32px;
  height: 32px;
  overflow: visible;
}

.task-gap {
  width: 4px;
  height: 38px;
  margin-right: 3px;
  border-left: 1px solid #55677e;
  border-right: 1px solid #55677e;
}

.ie {
  font: bold 34px "Liberation Sans", sans-serif;
  fill: #2aa3dd;
}

.cadmark {
  font: bold 11px "Liberation Mono", monospace;
  fill: #fff;
}

.tmark {
  font: bold 26px "Liberation Sans", sans-serif;
  fill: #fff;
}

.tray {
  margin-left: auto;
  display: flex;
  align-items: center;
  gap: 8px;
}

.kbd {
  margin-right: 6px;
}

.spk {
  margin: 0 2px;
}

.clock {
  width: 120px;
  margin-left: 5px;
  display: flex;
  flex-direction: column;
  align-items: center;
  gap: 1px;
  color: #e8f0f8;
  font-size: 13px;
  line-height: 17px;
}

.showdesk {
  width: 14px;
  height: 38px;
  border: 1px solid #7f95ac;
  background: linear-gradient(#66788c, #4f6176);
}
```
